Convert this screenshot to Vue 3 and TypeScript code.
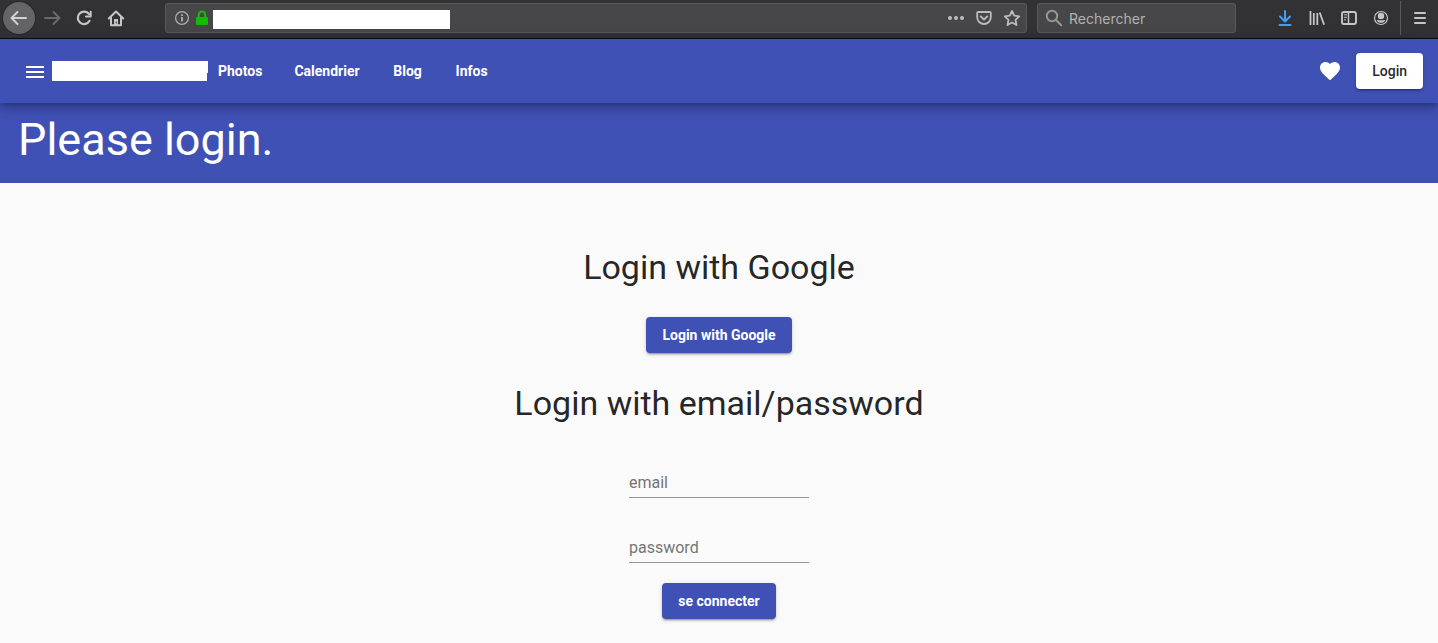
<script setup lang="ts">
import { ref } from 'vue'

interface NavLink {
  label: string
  href: string
}

const links: NavLink[] = [
  { label: 'Photos', href: '#photos' },
  { label: 'Calendrier', href: '#calendrier' },
  { label: 'Blog', href: '#blog' },
  { label: 'Infos', href: '#infos' },
]

const address = ref('')
const search = ref('')
const email = ref('')
const password = ref('')
</script>

<template>
  <div class="window">
    <div class="chrome">
      <button class="tool back" type="button" aria-label="Back">
        <svg width="32" height="32" viewBox="0 0 32 32" fill="none" stroke="#d2d2d3" stroke-width="2" stroke-linecap="round" stroke-linejoin="round"><path d="M23 16H9M14.500 10 8.500 16l6 6" /></svg>
      </button>
      <button class="tool" type="button" aria-label="Forward" disabled>
        <svg width="32" height="32" viewBox="0 0 32 32" fill="none" stroke="#6a6a6c" stroke-width="2" stroke-linecap="round" stroke-linejoin="round"><path d="M9 16h14M17.500 10l6 6-6 6" /></svg>
      </button>
      <button class="tool" type="button" aria-label="Reload">
        <svg width="32" height="32" viewBox="0 0 32 32" fill="none" stroke="#c6c6c7" stroke-width="2.200" stroke-linecap="round"><path d="M21 12.200A6.200 6.200 0 1 0 21.500 18.800" /><path d="M22.700 9.800v4.700h-4.700" stroke-width="2" stroke-linejoin="round" /></svg>
      </button>
      <button class="tool" type="button" aria-label="Home">
        <svg width="32" height="32" viewBox="0 0 32 32" fill="none" stroke="#c6c6c7" stroke-width="2" stroke-linejoin="round" stroke-linecap="round"><path d="M8.800 16.500 16 9.500l7.200 7M11 15.500V23.200h10v-7.700" /><path d="M14 17h4v6h-4z" fill="#c6c6c7" stroke="none" /><path d="M16.200 20v1" stroke="#323234" stroke-width="1" /></svg>
      </button>

      <div class="field url">
        <svg class="info" width="16" height="16" viewBox="0 0 16 16" fill="none" stroke="#b0b0b1"><circle cx="8" cy="8" r="6.400" stroke-width="1.200" /><path d="M8 7v4.500M8 4.200v1.700" stroke-width="1.800" /></svg>
        <svg class="lock" width="14" height="16" viewBox="0 0 14 16"><path d="M3.800 8V4.800a3.200 3.200 0 0 1 6.400 0V8" fill="none" stroke="#12bc00" stroke-width="2" /><rect x="1" y="7" width="12" height="8" rx="1" fill="#12bc00" /></svg>
        <input v-model="address" class="address" type="text" aria-label="Address" />
        <div class="url-actions">
          <button class="mini" type="button" aria-label="Page actions">
            <svg width="18" height="18" viewBox="0 0 18 18" fill="#bcbcbd"><circle cx="3" cy="9" r="2" /><circle cx="9" cy="9" r="2" /><circle cx="15" cy="9" r="2" /></svg>
          </button>
          <button class="mini" type="button" aria-label="Save to Pocket">
            <svg width="18" height="18" viewBox="0 0 18 18" fill="none" stroke="#bcbcbd" stroke-width="1.800" stroke-linecap="round" stroke-linejoin="round"><path d="M3.200 3h11.600a1 1 0 0 1 1 1v4.200a6.800 6.800 0 0 1-13.600 0V4a1 1 0 0 1 1-1z" /><path d="M5.700 7.300 9 10.500l3.300-3.200" /></svg>
          </button>
          <button class="mini" type="button" aria-label="Bookmark">
            <svg width="18" height="18" viewBox="0 0 18 18" fill="none" stroke="#bcbcbd" stroke-width="1.800" stroke-linejoin="round"><path d="m9 2 2.200 4.700 5 .6-3.700 3.500 1 5.200L9 13.500l-4.500 2.500 1-5.200L1.800 7.300l5-.6z" /></svg>
          </button>
        </div>
      </div>

      <label class="field search">
        <svg width="18" height="18" viewBox="0 0 18 18" fill="none" stroke="#969697" stroke-width="2" stroke-linecap="round"><circle cx="7" cy="7" r="5.200" /><path d="m11 11 5.200 5.200" /></svg>
        <input v-model="search" class="search-input" type="text" placeholder="Rechercher" aria-label="Rechercher" />
      </label>

      <div class="chrome-end">
        <button class="tool" type="button" aria-label="Downloads">
          <svg width="32" height="32" viewBox="0 0 32 32" fill="none" stroke="#459ef5" stroke-width="2" stroke-linecap="round" stroke-linejoin="round"><path d="M16 9v10M11 14.500l5 5 5-5M10.500 23h11" /></svg>
        </button>
        <button class="tool" type="button" aria-label="Library">
          <svg width="32" height="32" viewBox="0 0 32 32" fill="none" stroke="#c6c6c7" stroke-width="1.800"><path d="M9.500 9v14M12.800 11v12M16.300 11v12M18.700 10.500l4.400 12.300" /></svg>
        </button>
        <button class="tool" type="button" aria-label="Sidebars">
          <svg width="32" height="32" viewBox="0 0 32 32" fill="none" stroke="#c6c6c7" stroke-width="1.900"><rect x="9" y="10" width="14" height="12" rx="2" /><path d="M15.500 10v12" stroke-width="1.500" /><path d="M11 12.800h3M11 15.300h3M11 17.800h2" stroke-width="1" /></svg>
        </button>
        <button class="tool" type="button" aria-label="Account">
          <svg width="32" height="32" viewBox="0 0 32 32"><circle cx="16" cy="16" r="6.500" fill="none" stroke="#c6c6c7" stroke-width="1.200" /><circle cx="16" cy="14" r="3.200" fill="#c6c6c7" /><path d="M11.800 18.200c1.200-.5 2.200.2 4.200.2s3-.7 4.200-.2c-.8 1.700-2.400 2.600-4.200 2.600s-3.400-.9-4.200-2.600z" fill="#c6c6c7" /></svg>
        </button>
        <span class="divider"></span>
        <button class="tool menu" type="button" aria-label="Menu">
          <svg width="32" height="32" viewBox="0 0 32 32" stroke="#c6c6c7" stroke-width="2" stroke-linecap="round"><path d="M11 11h10M11 16h10M11 21h10" /></svg>
        </button>
      </div>
    </div>

    <header class="toolbar">
      <button class="icon-button" type="button" aria-label="Open navigation">
        <svg width="24" height="24" viewBox="0 0 24 24" fill="#fff"><path d="M3 18h18v-2H3v2zm0-5h18v-2H3v2zm0-7v2h18V6H3z" /></svg>
      </button>
      <a class="brand" href="#home" aria-label="Home"></a>
      <nav class="nav">
        <a v-for="link in links" :key="link.href" class="nav-link" :href="link.href">{{ link.label }}</a>
      </nav>
      <div class="toolbar-end">
        <button class="icon-button" type="button" aria-label="Favourites">
          <svg width="24" height="24" viewBox="0 0 24 24" fill="#fff"><path d="M12 21.350l-1.450-1.320C5.400 15.360 2 12.280 2 8.500 2 5.420 4.420 3 7.500 3c1.740 0 3.410.81 4.500 2.090C13.090 3.810 14.760 3 16.500 3 19.580 3 22 5.420 22 8.500c0 3.780-3.400 6.860-8.550 11.540L12 21.350z" /></svg>
        </button>
        <button class="button light" type="button">Login</button>
      </div>
    </header>

    <div class="banner"><h1>Please login.</h1></div>

    <main class="content">
      <h2>Login with Google</h2>
      <button class="button primary" type="button">Login with Google</button>
      <h2>Login with email/password</h2>
      <form class="form" @submit.prevent>
        <input v-model="email" class="text-field" type="email" placeholder="email" aria-label="email" />
        <input v-model="password" class="text-field" type="password" placeholder="password" aria-label="password" />
        <button class="button primary" type="submit">se connecter</button>
      </form>
    </main>
  </div>
</template>

<style>
body {
  background: #fafafa;
}
</style>

<style scoped>
.window {
  font-family: Roboto, "Liberation Sans", sans-serif;
  color: rgba(0, 0, 0, 0.87);
}
.window *,
.window *::after {
  box-sizing: border-box;
}
button,
input {
  margin: 0;
  padding: 0;
  border: 0;
  background: none;
  font-family: inherit;
  outline: none;
}
svg {
  display: block;
  flex: none;
}
.chrome {
  display: flex;
  align-items: center;
  height: 39px;
  padding: 0 2px 2px 3px;
  background: #323234;
  border-bottom: 1px solid #0c0c1c;
}
.tool {
  flex: none;
  width: 32px;
  height: 32px;
  border-radius: 4px;
}
.back {
  margin-right: 1px;
  border-radius: 50%;
  background: #656567;
  box-shadow: 0 0 0 1px #29292b;
}
.field {
  display: flex;
  align-items: center;
  height: 30px;
  border: 1px solid #5a5a5c;
  border-radius: 3px;
  background: #474749;
}
.url {
  flex: 1;
  min-width: 0;
  margin-left: 33px;
  padding: 0 5px 0 8px;
}
.lock {
  margin-left: 5px;
}
.address {
  flex: 0 1 237px;
  min-width: 0;
  height: 19px;
  margin: 3px 0 0 4px;
  background: #fff;
  font-size: 14px;
}
.url-actions {
  display: flex;
  gap: 10px;
  margin-left: auto;
}
.mini {
  width: 18px;
  height: 18px;
}
.search {
  flex: 0 1 199px;
  min-width: 0;
  margin-left: 10px;
  padding-left: 7px;
  gap: 6px;
}
.search-input {
  flex: 1;
  min-width: 0;
  height: 20px;
  color: #f9f9fa;
  font-family: Inter, sans-serif;
  font-size: 14px;
}
.search-input::placeholder {
  color: #b1b1b3;
  opacity: 1;
}
.chrome-end {
  display: flex;
  align-items: center;
  margin-left: 33px;
}
.divider {
  width: 1px;
  height: 34px;
  margin-left: 3px;
  background: #5b5b5d;
}
.menu {
  margin-left: 3px;
}
.toolbar {
  position: relative;
  z-index: 1;
  display: flex;
  align-items: center;
  height: 64px;
  padding: 0 15px 0 16px;
  background: #3f51b5;
  box-shadow:
    0 3px 5px -1px rgba(0, 0, 0, 0.2),
    0 6px 10px 0 rgba(0, 0, 0, 0.14),
    0 1px 18px 0 rgba(0, 0, 0, 0.12);
}
.icon-button {
  display: flex;
  align-items: center;
  justify-content: center;
  width: 36px;
  height: 40px;
}
.toolbar > .icon-button {
  padding-left: 1px;
  padding-top: 2px;
}
.brand {
  position: relative;
  width: 155px;
  height: 20px;
  background: #fff;
}
.brand::after {
  content: "";
  position: absolute;
  top: 0;
  left: 100%;
  width: 1px;
  height: 12px;
  background: #fff;
}
.nav {
  display: flex;
  margin-left: -5px;
}
.nav-link {
  min-width: 64px;
  padding: 0 16px;
  color: #fff;
  font-size: 14px;
  font-weight: 700;
  line-height: 36px;
  text-align: center;
  text-decoration: none;
}
.toolbar-end {
  display: flex;
  align-items: center;
  gap: 8px;
  margin-left: auto;
}
.button {
  min-width: 64px;
  padding: 0 16px;
  border-radius: 4px;
  font-size: 14px;
  font-weight: 500;
  line-height: 36px;
  box-shadow:
    0 3px 1px -2px rgba(0, 0, 0, 0.2),
    0 2px 2px 0 rgba(0, 0, 0, 0.14),
    0 1px 5px 0 rgba(0, 0, 0, 0.12);
}
.light {
  background: #fff;
  color: rgba(0, 0, 0, 0.87);
}
.primary {
  background: #3f51b5;
  color: #fff;
  font-weight: 700;
}
.banner {
  height: 80px;
  padding: 13px 18px;
  background: #3f51b5;
  color: #fff;
}
h1 {
  margin: 0;
  font-size: 45px;
  font-weight: 400;
  line-height: 48px;
}
.content {
  display: flex;
  flex-direction: column;
  align-items: center;
  padding: 34px 20px 24px;
}
h2 {
  margin: 30px 0;
  font-size: 34px;
  font-weight: 400;
  line-height: 40px;
  text-align: center;
}
.form {
  display: flex;
  flex-direction: column;
  align-items: center;
  gap: 35px;
  margin-top: 15px;
}
.text-field {
  width: 180px;
  height: 30px;
  border-bottom: 1px solid #949494;
  color: rgba(0, 0, 0, 0.87);
  font-size: 16px;
}
.text-field::placeholder {
  color: #757575;
  opacity: 1;
}
.form .button {
  margin-top: -15px;
}
</style>
